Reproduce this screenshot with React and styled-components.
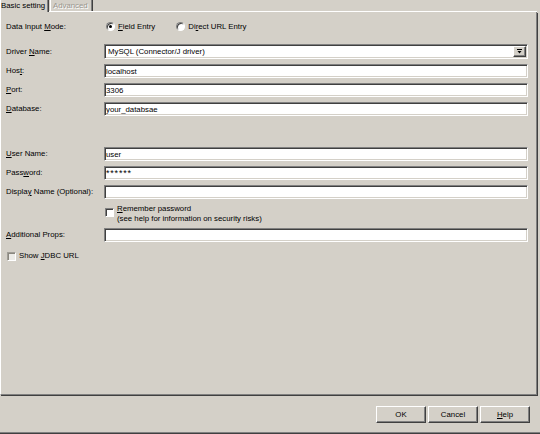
import React from 'react';
import styled, { createGlobalStyle } from 'styled-components';

const Global = createGlobalStyle`
  html, body { margin: 0; padding: 0; background: #d4d0c8; }
  body {
    width: 540px; height: 434px; overflow: hidden;
    font-family: "Liberation Sans", Arial, sans-serif;
    font-size: 7.8px; color: #000;
  }
  * { box-sizing: border-box; }
`;

const Window = styled.div`
  width: 540px;
  height: 434px;
  display: flex;
  flex-direction: column;
  background: #d4d0c8;
`;

const TabStrip = styled.div`
  height: 12px;
  flex: none;
  display: flex;
  align-items: flex-end;
  border-bottom: 1px solid #fff;
  width: 537px;
`;

const Tab = styled.div`
  position: relative;
  z-index: 1;
  height: ${p => (p.$active ? '12px' : '11px')};
  width: ${p => p.$w}px;
  margin-left: ${p => (p.$active ? 0 : 1)}px;
  margin-bottom: ${p => (p.$active ? '-1px' : '0')};
  padding-left: ${p => (p.$active ? 0 : 2)}px;
  background: #d4d0c8;
  border-left: 1px solid #fff;
  border-right: 1px solid #404040;
  box-shadow: inset -1px 0 0 #808080;
  display: flex;
  align-items: center;
  line-height: 1;
  white-space: nowrap;
  color: ${p => (p.$disabled ? '#9a978f' : '#000')};
  text-shadow: ${p => (p.$disabled ? '1px 1px 0 #fff' : 'none')};
  padding-bottom: ${p => (p.$active ? 1 : 0)}px;
`;

const Panel = styled.div`
  flex: none;
  width: 537px;
  height: 383px;
  border-left: 1px solid #fff;
  border-right: 1px solid #808080;
  border-bottom: 1px solid #808080;
  box-shadow: 1px 1px 0 #404040;
  padding: 7px 8px 0 5px;
  display: flex;
  flex-direction: column;
`;

const Section = styled.div`
  display: grid;
  grid-template-columns: 98px 1fr;
  row-gap: 5px;
  margin-top: ${p => p.$mt || 0}px;
`;

const Label = styled.div`
  display: flex;
  align-items: center;
  white-space: nowrap;
  line-height: 1;
`;

const Mn = styled.span`
  text-decoration: underline;
  text-underline-offset: 1px;
`;

const RadioGroup = styled.div`
  display: flex;
  align-items: center;
  gap: 21px;
  height: 15px;
  padding-left: 2px;
`;

const Option = styled.label`
  display: flex;
  align-items: center;
  gap: 3px;
  white-space: nowrap;
  line-height: 1;
`;

const RadioDot = styled.span`
  position: relative;
  width: 9px;
  height: 9px;
  border-radius: 50%;
  background: #fff;
  border: 1px solid;
  border-color: #808080 #fff #fff #808080;
  box-shadow: inset 1px 1px 0 #404040;
  flex: none;
  &::after {
    content: '';
    display: ${p => (p.$checked ? 'block' : 'none')};
    position: absolute;
    left: 2px;
    top: 2px;
    width: 3px;
    height: 3px;
    border-radius: 50%;
    background: #000;
  }
`;

const TextBox = styled.input`
  height: 14px;
  width: 100%;
  margin: 0;
  padding: 0 0 0 1px;
  border: 1px solid;
  border-color: #808080 #fff #fff #808080;
  box-shadow: inset 1px 1px 0 #404040, inset -1px -1px 0 #d4d0c8;
  background: #fff;
  font-family: inherit;
  font-size: ${p => (p.$mask ? '9px' : '7.8px')};
  letter-spacing: ${p => (p.$mask ? '0.8px' : 'normal')};
  color: #000;
  outline: none;
`;

const Combo = styled.div`
  height: 15px;
  display: flex;
  align-items: stretch;
  border: 1px solid;
  border-color: #808080 #fff #fff #808080;
  box-shadow: inset 1px 1px 0 #404040, inset -1px -1px 0 #d4d0c8;
  background: #fff;
  padding: 1px;
`;

const ComboText = styled.div`
  flex: 1;
  display: flex;
  align-items: center;
  padding-left: 2px;
  line-height: 1;
  white-space: nowrap;
`;

const ComboButton = styled.div`
  width: 13px;
  background: #d4d0c8;
  border: 1px solid;
  border-color: #fff #404040 #404040 #fff;
  box-shadow: inset -1px -1px 0 #808080;
  display: flex;
  align-items: center;
  justify-content: center;
`;

const CheckRow = styled.div`
  grid-column: ${p => (p.$full ? '1 / -1' : '2')};
  display: flex;
  align-items: ${p => (p.$top ? 'flex-start' : 'center')};
  gap: 3px;
  height: ${p => p.$h}px;
  padding-left: 1px;
`;

const Box = styled.span`
  width: 9px;
  height: 9px;
  flex: none;
  margin-top: ${p => p.$mt || 0}px;
  background: ${p => (p.$muted ? '#ecebe7' : '#fff')};
  border: 1px solid;
  border-color: ${p => (p.$muted ? '#a09d96 #fff #fff #a09d96' : '#808080 #fff #fff #808080')};
  box-shadow: inset 1px 1px 0 ${p => (p.$muted ? '#8a877f' : '#404040')};
`;

const CheckText = styled.div`
  line-height: ${p => p.$lh || 1};
  white-space: nowrap;
`;

const Footer = styled.div`
  flex: 1;
  display: flex;
  justify-content: flex-end;
  align-items: flex-start;
  gap: 2px;
  padding: 11px 10px 0 0;
  box-shadow: inset 0 -1px 0 #404040, inset 0 -2px 0 #808080;
`;

const Button = styled.button`
  width: 50px;
  height: 17px;
  margin: 0;
  padding: 0;
  background: #d4d0c8;
  border: 1px solid;
  border-color: #fff #404040 #404040 #fff;
  box-shadow: inset -1px -1px 0 #808080;
  font-family: inherit;
  font-size: 7.8px;
  color: #000;
  line-height: 1;
`;

const Arrow = () => (
  <svg width="5" height="5" viewBox="0 0 5 5">
    <rect x="0" y="0" width="5" height="1" fill="#000" />
    <polygon points="0.5,2 4.5,2 2.5,4.5" fill="#000" />
  </svg>
);

const Field = ({ label, children }) => (
  <>
    <Label>{label}</Label>
    {children}
  </>
);

export default function App() {
  return (
    <>
      <Global />
      <Window>
        <TabStrip>
          <Tab $active $w={49}>Basic setting</Tab>
          <Tab $disabled $w={43}>Advanced</Tab>
        </TabStrip>
        <Panel>
          <Section>
            <Field label={<span>Data Input <Mn>M</Mn>ode:</span>}>
              <RadioGroup>
                <Option><RadioDot $checked /><span><Mn>F</Mn>ield Entry</span></Option>
                <Option><RadioDot /><span>Di<Mn>r</Mn>ect URL Entry</span></Option>
              </RadioGroup>
            </Field>
          </Section>
          <Section $mt={10}>
            <Field label={<span>Driver <Mn>N</Mn>ame:</span>}>
              <Combo>
                <ComboText>MySQL (Connector/J driver)</ComboText>
                <ComboButton><Arrow /></ComboButton>
              </Combo>
            </Field>
            <Field label={<span>Hos<Mn>t</Mn>:</span>}>
              <TextBox readOnly value="localhost" />
            </Field>
            <Field label={<span><Mn>P</Mn>ort:</span>}>
              <TextBox readOnly value="3306" />
            </Field>
            <Field label={<span><Mn>D</Mn>atabase:</span>}>
              <TextBox readOnly value="your_databsae" />
            </Field>
          </Section>
          <Section $mt={31}>
            <Field label={<span><Mn>U</Mn>ser Name:</span>}>
              <TextBox readOnly value="user" />
            </Field>
            <Field label={<span>Pass<Mn>w</Mn>ord:</span>}>
              <TextBox readOnly $mask value="******" />
            </Field>
            <Field label={<span>Displa<Mn>y</Mn> Name (Optional):</span>}>
              <TextBox readOnly value="" />
            </Field>
            <CheckRow $top $h={19}>
              <Box $mt={4} />
              <CheckText $lh={1.28}>
                <Mn>R</Mn>emember password<br />
                (see help for information on security risks)
              </CheckText>
            </CheckRow>
            <Field label={<span><Mn>A</Mn>dditional Props:</span>}>
              <TextBox readOnly value="" />
            </Field>
          </Section>
          <Section $mt={7}>
            <CheckRow $full $h={14}>
              <Box $muted />
              <CheckText>Show <Mn>J</Mn>DBC URL</CheckText>
            </CheckRow>
          </Section>
        </Panel>
        <Footer>
          <Button>OK</Button>
          <Button>Cancel</Button>
          <Button><Mn>H</Mn>elp</Button>
        </Footer>
      </Window>
    </>
  );
}
